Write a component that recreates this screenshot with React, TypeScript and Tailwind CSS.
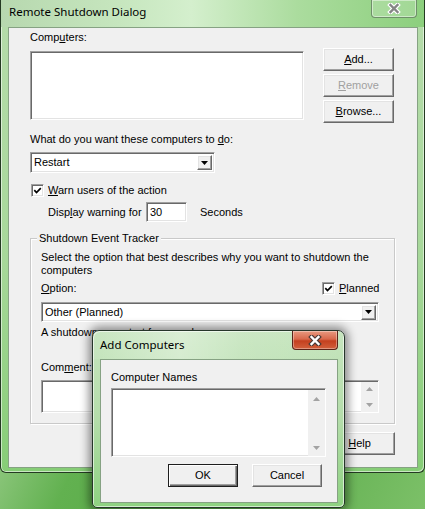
import React from 'react'

const ui = "font-['Liberation_Sans',Arial,sans-serif] text-[11px] leading-[13px] text-black"
const caption = "font-['Noto_Sans','Open_Sans',sans-serif] text-[11.5px] leading-[16px] text-black"

const raised =
  'bg-[#f0f0f0] border border-t-white border-l-white border-r-[#696969] border-b-[#696969] shadow-[inset_-1px_-1px_0_#a0a0a0,inset_1px_1px_0_#e3e3e3]'
const sunken =
  'bg-white border border-t-[#a0a0a0] border-l-[#a0a0a0] border-r-white border-b-white shadow-[inset_1px_1px_0_#696969,inset_-1px_-1px_0_#e3e3e3]'

const CloseX: React.FC<{ fill: string; edge: string }> = ({ fill, edge }) => (
  <svg width="14" height="11" viewBox="0 0 14 11">
    <path d="M3.5 2 L10.5 9 M10.5 2 L3.5 9" stroke={edge} strokeWidth="4.6" strokeLinecap="square" />
    <path d="M3.5 2 L10.5 9 M10.5 2 L3.5 9" stroke={fill} strokeWidth="2.4" strokeLinecap="square" />
  </svg>
)

const Tri: React.FC<{ up?: boolean; color: string }> = ({ up, color }) => (
  <svg width="7" height="4" viewBox="0 0 7 4">
    <path d={up ? 'M0 4 L3.5 0 L7 4 Z' : 'M0 0 L7 0 L3.5 4 Z'} fill={color} />
  </svg>
)

const CheckBox: React.FC = () => (
  <div className={`w-[13px] h-[13px] shrink-0 flex items-center justify-center ${sunken}`}>
    <svg width="9" height="9" viewBox="0 0 9 9">
      <path d="M1.3 4.2 L3.5 6.5 L7.8 2.1" stroke="#000" strokeWidth="1.7" fill="none" />
    </svg>
  </div>
)

const Btn: React.FC<{ children: React.ReactNode; w?: string; disabled?: boolean; primary?: boolean }> = ({
  children,
  w = 'w-[71px]',
  disabled,
  primary,
}) => (
  <div
    className={`h-[23px] ${w} flex items-center justify-center ${
      primary
        ? 'bg-[#f0f0f0] border border-[#1e1e1e] shadow-[inset_1px_1px_0_#fff,inset_-1px_-1px_0_#696969,inset_-2px_-2px_0_#a0a0a0]'
        : raised
    } ${disabled ? 'text-[#a0a0a0]' : ''}`}
  >
    {children}
  </div>
)

const Combo: React.FC<{ value: string; className: string }> = ({ value, className }) => (
  <div className={`flex items-center ${sunken} ${className}`}>
    <span className="pl-[3px]">{value}</span>
    <div className={`ml-auto mr-[2px] w-[15px] h-[15px] flex items-center justify-center ${raised}`}>
      <Tri color="#000" />
    </div>
  </div>
)

const ScrollCol: React.FC<{ pad: string }> = ({ pad }) => (
  <div className={`ml-auto mt-[1px] w-[17px] bg-[#f0f0f0] flex flex-col items-center justify-between ${pad}`}>
    <Tri up color="#a3a3a3" />
    <Tri color="#a3a3a3" />
  </div>
)

const App: React.FC = () => {
  return (
    <div
      className={`relative w-[425px] h-[509px] overflow-hidden bg-[linear-gradient(115deg,#4a9a3c_0%,#5fb04c_18%,#94ca84_30%,#62b150_44%,#55a845_68%,#7cc068_100%)] ${ui}`}
    >
      {/* Remote Shutdown Dialog */}
      <div className="w-[425px] h-[473px] flex flex-col rounded-b-[6px] border border-t-0 border-[#243a22] bg-[linear-gradient(180deg,#b6dcab_0%,#a7d89a_55%,#86cd76_100%)] shadow-[inset_1px_0_0_rgba(255,255,255,0.55),inset_-1px_-1px_0_rgba(255,255,255,0.55)]">
        <div className="h-[27px] flex items-start justify-between bg-[linear-gradient(90deg,#b7d8af_0%,#c6e6be_28%,#d4efcd_45%,#abdc9e_70%,#8ccf7d_100%)]">
          <span className={`pl-[8px] pt-[4px] ${caption}`}>Remote Shutdown Dialog</span>
          <div className="mr-[7px] w-[46px] h-[18px] flex items-center justify-center rounded-b-[4px] border border-t-0 border-[#6f8f6a] bg-[rgba(255,255,255,0.18)] shadow-[inset_0_0_0_1px_rgba(255,255,255,0.45)]">
            <CloseX fill="#858585" edge="#ffffff" />
          </div>
        </div>

        <div className="ml-[7px] w-[410px] h-[441px] border border-[#86a283] bg-[#f0f0f0] pl-[21px] pt-[3px]">
          <div className="flex items-start">
            <div className="w-[274px]">
              <div>
                Comp<span className="underline">u</span>ters:
              </div>
              <div className={`mt-[7px] h-[69px] ${sunken}`} />
            </div>
            <div className="ml-[19px] mt-[17px] flex flex-col gap-[3px]">
              <Btn>
                <span>
                  <span className="underline">A</span>dd...
                </span>
              </Btn>
              <Btn disabled>
                <span>
                  <span className="underline">R</span>emove
                </span>
              </Btn>
              <Btn>
                <span>
                  <span className="underline">B</span>rowse...
                </span>
              </Btn>
            </div>
          </div>

          <div className="mt-[10px]">
            What do you want these computers to <span className="underline">d</span>o:
          </div>
          <Combo value="Restart" className="mt-[6px] w-[185px] h-[21px]" />

          <div className="mt-[11px] h-[13px] flex items-center pl-[1px]">
            <CheckBox />
            <span className="ml-[4px]">
              <span className="underline">W</span>arn users of the action
            </span>
          </div>

          <div className="mt-[5px] h-[20px] flex items-center pl-[18px]">
            <span className="w-[98px]">
              Disp<span className="underline">l</span>ay warning for
            </span>
            <div className={`w-[41px] h-[20px] flex items-center pl-[3px] ${sunken}`}>30</div>
            <span className="ml-[13px]">Seconds</span>
          </div>

          <div className="relative mt-[16px] w-[365px] h-[186px] border border-[#c9c9c9] shadow-[inset_1px_1px_0_#fff,1px_1px_0_#fff] pl-[10px] pt-[12px]">
            <span className="absolute left-[6px] -top-[7px] px-[2px] bg-[#f0f0f0]">Shutdown Event Tracker</span>
            <div>
              Select the option that best describes why you want to shutdown the
              <br />
              computers
            </div>
            <div className="mt-[5px] h-[13px] flex items-center">
              <span className="w-[281px]">
                <span className="underline">O</span>ption:
              </span>
              <CheckBox />
              <span className="ml-[4px]">
                <span className="underline">P</span>lanned
              </span>
            </div>
            <Combo value="Other (Planned)" className="mt-[7px] w-[338px] h-[20px]" />
            <div className="mt-[4px] h-[35px]">A shutdown or restart for an unknown reason</div>
            <div>
              Com<span className="underline">m</span>ent:
            </div>
            <div className={`mt-[6px] w-[338px] h-[33px] flex ${sunken}`}>
              <ScrollCol pad="py-[5px]" />
            </div>
          </div>

          <div className="mt-[8px] w-[365px] flex justify-end gap-[5px]">
            <Btn>OK</Btn>
            <Btn>Cancel</Btn>
            <Btn>
              <span>
                <span className="underline">H</span>elp
              </span>
            </Btn>
          </div>
        </div>
      </div>

      {/* Add Computers */}
      <div className="absolute left-[92px] top-[330px] w-[253px] h-[178px] flex flex-col rounded-t-[7px] rounded-b-[5px] border border-[#26362a] bg-[linear-gradient(180deg,#c6e5be_0%,#b4ddaa_50%,#8ed281_100%)] shadow-[0_0_10px_3px_rgba(0,0,0,0.45),inset_1px_1px_0_rgba(255,255,255,0.6),inset_-1px_-1px_0_rgba(255,255,255,0.6)]">
        <div className="h-[28px] flex items-start justify-between rounded-t-[6px] bg-[linear-gradient(95deg,rgba(255,255,255,0.05)_0%,rgba(255,255,255,0.35)_35%,rgba(255,255,255,0.1)_60%,rgba(255,255,255,0)_100%)]">
          <span className={`pl-[7px] pt-[6px] ${caption}`}>Add Computers</span>
          <div className="mr-[6px] w-[46px] h-[19px] flex items-center justify-center rounded-b-[4px] border border-t-0 border-[#5a2418] bg-[linear-gradient(180deg,#e89a80_0%,#d8694c_45%,#c4401f_55%,#d2603c_100%)] shadow-[inset_0_0_0_1px_rgba(255,255,255,0.35)]">
            <CloseX fill="#ffffff" edge="#4b3a36" />
          </div>
        </div>
        <div className="ml-[7px] w-[238px] h-[144px] border border-[#86a283] bg-[#f0f0f0] pl-[10px] pt-[11px]">
          <div>Computer Names</div>
          <div className={`mt-[4px] w-[215px] h-[69px] flex ${sunken}`}>
            <ScrollCol pad="pt-[7px] pb-[6px]" />
          </div>
          <div className="mt-[7px] ml-[57px] flex gap-[14px]">
            <Btn w="w-[70px]" primary>
              OK
            </Btn>
            <Btn w="w-[70px]">Cancel</Btn>
          </div>
        </div>
      </div>
    </div>
  )
}

export default App
